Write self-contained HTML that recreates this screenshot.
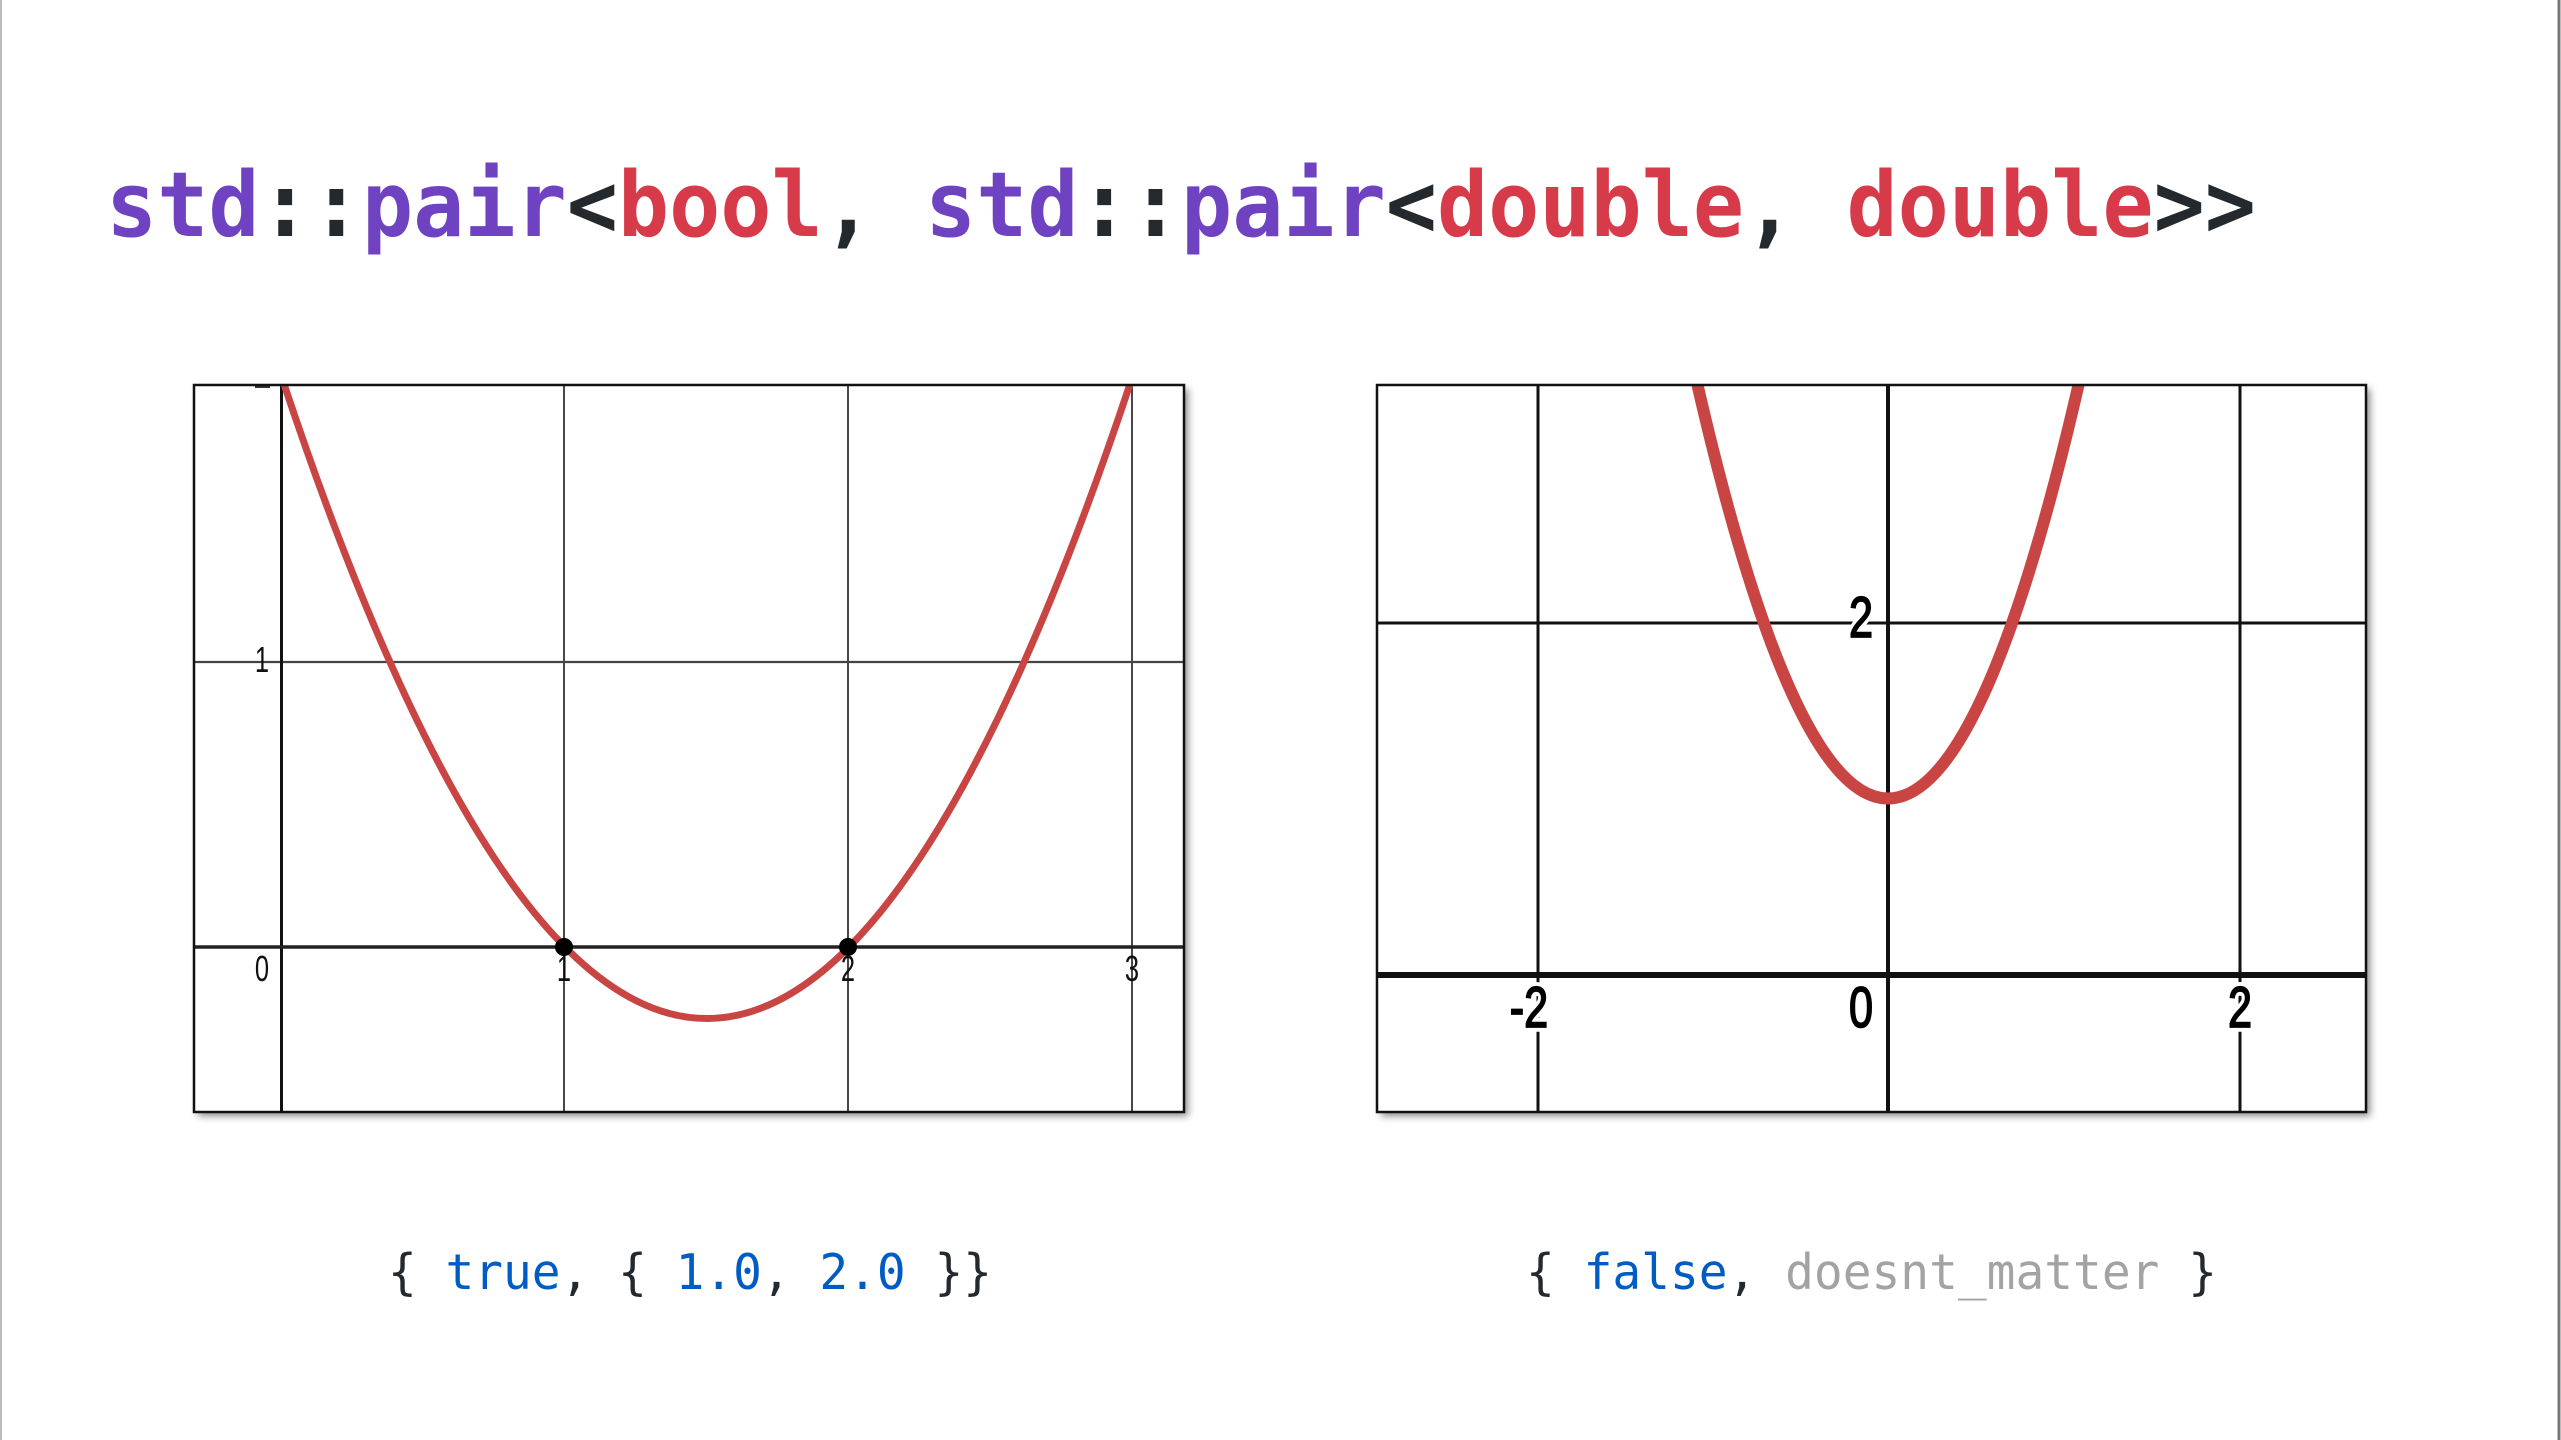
<!DOCTYPE html>
<html><head><meta charset="utf-8"><style>
html,body{margin:0;padding:0;background:#fff;}
svg{display:block;}
</style></head><body>
<svg width="2561" height="1440" viewBox="0 0 2561 1440" xmlns="http://www.w3.org/2000/svg">
<defs>
<filter id="sh" x="-5%" y="-5%" width="110%" height="110%"><feGaussianBlur stdDeviation="4"/></filter>
<clipPath id="c1"><rect x="194" y="385" width="990" height="727"/></clipPath>
<clipPath id="c2"><rect x="1377" y="385" width="989" height="727"/></clipPath>
</defs>
<rect width="2561" height="1440" fill="#fff"/>
<line x1="1" y1="0" x2="1" y2="1440" stroke="#bbb" stroke-width="2"/>
<line x1="2559" y1="0" x2="2559" y2="1440" stroke="#777" stroke-width="3"/>

<text x="106" y="236" font-family="DejaVu Sans Mono, Liberation Mono, monospace" font-weight="bold" font-size="90" textLength="2150" lengthAdjust="spacingAndGlyphs" fill="#24292e"><tspan fill="#6f42c1">std</tspan>::<tspan fill="#6f42c1">pair</tspan>&lt;<tspan fill="#d73a49">bool</tspan>, <tspan fill="#6f42c1">std</tspan>::<tspan fill="#6f42c1">pair</tspan>&lt;<tspan fill="#d73a49">double</tspan>, <tspan fill="#d73a49">double</tspan>&gt;&gt;</text>

<!-- left plot -->
<rect x="198" y="389" width="990" height="727" fill="#888" filter="url(#sh)"/>
<rect x="194" y="385" width="990" height="727" fill="#fff"/>
<g clip-path="url(#c1)">
<g stroke="#333" stroke-width="1.8">
<line x1="564" y1="385" x2="564" y2="1112"/>
<line x1="848" y1="385" x2="848" y2="1112"/>
<line x1="1132" y1="385" x2="1132" y2="1112"/>
<line x1="194" y1="662" x2="1184" y2="662" stroke="#444" stroke-width="2.2"/>
</g>
<line x1="281.5" y1="385" x2="281.5" y2="1112" stroke="#111" stroke-width="3"/>
<line x1="194" y1="947" x2="1184" y2="947" stroke="#222" stroke-width="3.5"/>
<path d="M281,375 Q707,1662 1133,375" fill="none" stroke="#c94543" stroke-width="7"/>
</g>
<circle cx="564" cy="947" r="9" fill="#000"/>
<circle cx="848" cy="947" r="9" fill="#000"/>
<g font-family="Liberation Sans, Arial, sans-serif" font-size="30" fill="#111" text-anchor="middle">
<text transform="translate(262 981) scale(0.85 1.2)">0</text>
<text transform="translate(564 981) scale(0.85 1.2)">1</text>
<text transform="translate(848 981) scale(0.85 1.2)">2</text>
<text transform="translate(1132 981) scale(0.85 1.2)">3</text>
<text transform="translate(262 672) scale(0.85 1.2)">1</text>
</g>
<line x1="255" y1="387" x2="270" y2="387" stroke="#333" stroke-width="2"/>
<rect x="194" y="385" width="990" height="727" fill="none" stroke="#111" stroke-width="2.5"/>

<!-- right plot -->
<rect x="1381" y="389" width="989" height="727" fill="#888" filter="url(#sh)"/>
<rect x="1377" y="385" width="989" height="727" fill="#fff"/>
<g clip-path="url(#c2)">
<g stroke="#111" stroke-width="3">
<line x1="1538" y1="385" x2="1538" y2="1112"/>
<line x1="2240" y1="385" x2="2240" y2="1112"/>
<line x1="1377" y1="623" x2="2366" y2="623"/>
</g>
<line x1="1888" y1="385" x2="1888" y2="1112" stroke="#111" stroke-width="4"/>
<line x1="1377" y1="975" x2="2366" y2="975" stroke="#111" stroke-width="6"/>
<path d="M1606.4,-105 Q1888,1702 2169.6,-105" fill="none" stroke="#c94543" stroke-width="12"/>
<g font-family="Liberation Sans, Arial, sans-serif" font-size="48" fill="#000" text-anchor="middle" stroke="#fff" stroke-width="8" paint-order="stroke">
<text transform="translate(1529 1027) scale(0.9 1.2)">-2</text>
<text transform="translate(1861 1027) scale(0.9 1.2)">0</text>
<text transform="translate(2240 1027) scale(0.9 1.2)">2</text>
<text transform="translate(1861 637) scale(0.9 1.2)">2</text>
</g>
<g font-family="Liberation Sans, Arial, sans-serif" font-size="48" fill="none" text-anchor="middle" stroke="#000" stroke-width="1.5">
<text transform="translate(1529 1027) scale(0.9 1.2)">-2</text>
<text transform="translate(1861 1027) scale(0.9 1.2)">0</text>
<text transform="translate(2240 1027) scale(0.9 1.2)">2</text>
<text transform="translate(1861 637) scale(0.9 1.2)">2</text>
</g>
</g>
<rect x="1377" y="385" width="989" height="727" fill="none" stroke="#111" stroke-width="2.5"/>

<g font-family="DejaVu Sans Mono, Liberation Mono, monospace" font-size="49" fill="#24292e">
<text x="388" y="1289" textLength="604" lengthAdjust="spacingAndGlyphs">{ <tspan fill="#005cc5">true</tspan>, { <tspan fill="#005cc5">1.0</tspan>, <tspan fill="#005cc5">2.0</tspan> }}</text>
<text x="1526" y="1289" textLength="691" lengthAdjust="spacingAndGlyphs">{ <tspan fill="#005cc5">false</tspan>, <tspan fill="#a3a3a3">doesnt_matter</tspan> }</text>
</g>
</svg>
</body></html>
